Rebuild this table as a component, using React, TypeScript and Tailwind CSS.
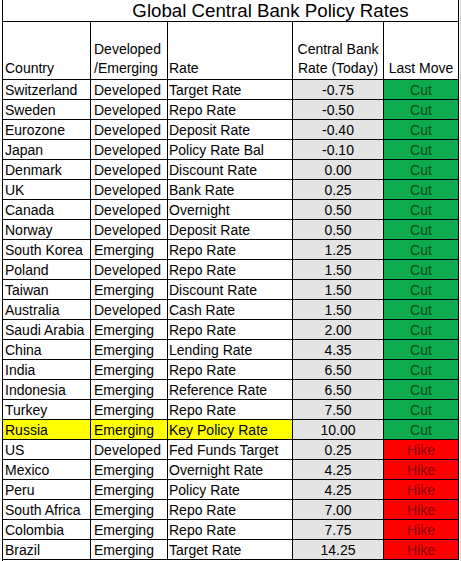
const rows: [string, string, string, string, 'Cut' | 'Hike'][] = [
  ['Switzerland', 'Developed', 'Target Rate', '-0.75', 'Cut'],
  ['Sweden', 'Developed', 'Repo Rate', '-0.50', 'Cut'],
  ['Eurozone', 'Developed', 'Deposit Rate', '-0.40', 'Cut'],
  ['Japan', 'Developed', 'Policy Rate Bal', '-0.10', 'Cut'],
  ['Denmark', 'Developed', 'Discount Rate', '0.00', 'Cut'],
  ['UK', 'Developed', 'Bank Rate', '0.25', 'Cut'],
  ['Canada', 'Developed', 'Overnight', '0.50', 'Cut'],
  ['Norway', 'Developed', 'Deposit Rate', '0.50', 'Cut'],
  ['South Korea', 'Emerging', 'Repo Rate', '1.25', 'Cut'],
  ['Poland', 'Developed', 'Repo Rate', '1.50', 'Cut'],
  ['Taiwan', 'Emerging', 'Discount Rate', '1.50', 'Cut'],
  ['Australia', 'Developed', 'Cash Rate', '1.50', 'Cut'],
  ['Saudi Arabia', 'Emerging', 'Repo Rate', '2.00', 'Cut'],
  ['China', 'Emerging', 'Lending Rate', '4.35', 'Cut'],
  ['India', 'Emerging', 'Repo Rate', '6.50', 'Cut'],
  ['Indonesia', 'Emerging', 'Reference Rate', '6.50', 'Cut'],
  ['Turkey', 'Emerging', 'Repo Rate', '7.50', 'Cut'],
  ['Russia', 'Emerging', 'Key Policy Rate', '10.00', 'Cut'],
  ['US', 'Developed', 'Fed Funds Target', '0.25', 'Hike'],
  ['Mexico', 'Emerging', 'Overnight Rate', '4.25', 'Hike'],
  ['Peru', 'Emerging', 'Policy Rate', '4.25', 'Hike'],
  ['South Africa', 'Emerging', 'Repo Rate', '7.00', 'Hike'],
  ['Colombia', 'Emerging', 'Repo Rate', '7.75', 'Hike'],
  ['Brazil', 'Emerging', 'Target Rate', '14.25', 'Hike'],
];

// Column widths include each cell's right border; the sheet adds one line on the left.
const cols = 'grid grid-cols-[88px_77px_125px_91px_75px]';

export default function App() {
  return (
    <div className="w-[461px] h-[561px] bg-white flex text-black font-[Liberation_Sans,Arial,sans-serif]">
      <div className="ml-[2px] w-[457px] border-l border-black">
        {/* Title row — merged across the sheet, no inner lines */}
        <div className="h-[22px] border-b border-r border-black flex justify-center pl-[80px] text-[18.7px] leading-[22px]">
          Global Central Bank Policy Rates
        </div>

        {/* Header row, bottom aligned like Excel */}
        <div className={`${cols} h-[58px] text-[14px] leading-[19px]`}>
          <div className="border-r border-b border-black flex items-end pl-[2px] pb-[1px]">Country</div>
          <div className="border-r border-b border-black flex items-end pl-[3px] pb-[1px]">
            Developed
            <br />
            /Emerging
          </div>
          <div className="border-r border-b border-black flex items-end pl-[1px] pb-[1px]">Rate</div>
          <div className="border-r border-b border-black flex items-end justify-center text-center pb-[1px]">
            Central Bank
            <br />
            Rate (Today)
          </div>
          <div className="border-r border-b border-black flex items-end justify-center pb-[1px]">Last Move</div>
        </div>

        {rows.map(([country, type, rate, value, move]) => {
          const hl = country === 'Russia' ? 'bg-[#ffff00]' : '';
          return (
            <div key={country} className={`${cols} h-[20px] text-[14px] leading-[17px]`}>
              <div className={`border-r border-b border-black pl-[2px] pt-[2px] whitespace-nowrap ${hl}`}>{country}</div>
              <div className={`border-r border-b border-black pl-[3px] pt-[2px] ${hl}`}>{type}</div>
              <div className={`border-r border-b border-black pl-[1px] pt-[2px] whitespace-nowrap ${hl}`}>{rate}</div>
              <div className="border-r border-b border-black bg-[#e4e4e4] text-center pt-[2px]">{value}</div>
              <div
                className={`border-r border-b border-black text-center pt-[2px] ${
                  move === 'Cut' ? 'bg-[#0eac4e] text-[#0a471b]' : 'bg-[#ff0000] text-[#8a000c]'
                }`}
              >
                {move}
              </div>
            </div>
          );
        })}
      </div>
      {/* faint gridline of the next sheet column */}
      <div className="ml-[1px] w-px bg-[#d6d6d6]" />
    </div>
  );
}
